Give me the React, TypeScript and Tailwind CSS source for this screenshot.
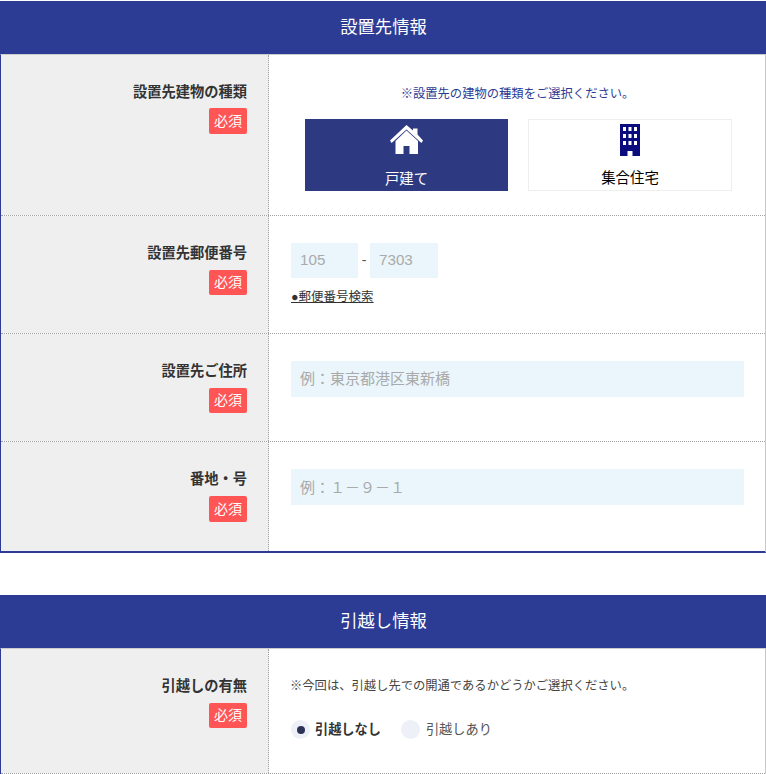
import type { ReactNode } from 'react';

function Row({ label, children, last, className, badgeClass }: { label: string; children: ReactNode; last?: boolean; className: string; badgeClass: string }) {
  return (
    <div className={`flex ${last ? '' : 'border-b border-dotted border-[#a0a0a0]'} ${className}`}>
      <div className="w-[268px] shrink-0 border-r border-dotted border-[#a0a0a0] bg-[#efefef] pr-[21px] text-right">
        <div className="pt-[27px] text-[14.25px] leading-[20px] font-bold text-[#333]">{label}</div>
        <div className="flex justify-end">
          <span className={`flex w-[38px] items-center justify-center rounded-[2px] bg-[#ff5555] text-[14px] text-white ${badgeClass}`}>必須</span>
        </div>
      </div>
      <div className="min-w-0 flex-1 pr-[21px] pl-[22px]">{children}</div>
    </div>
  );
}

function SectionHead({ title }: { title: string }) {
  return <div className="flex h-[53px] items-center justify-center bg-[#2c3c94] pl-px text-[17.3px] text-white">{title}</div>;
}

function HomeIcon() {
  return (
    <svg className="h-[30px] w-[33px]" viewBox="0 0 33 30" fill="#fff">
      <path d="M16.5 0 L23 5.6 V3.5 H27.5 V9.5 L33 15.5 L31.4 18 L16.5 4.4 L1.6 18 L0 15.5 Z" />
      <path d="M16.5 5.4 L28 16 V29 H19.5 V21 H13.5 V29 H5.5 V16 Z" />
    </svg>
  );
}

function BuildingIcon() {
  return (
    <svg className="h-[32px] w-[20px]" viewBox="0 0 20 32">
      <path fill="#0b0b80" d="M0 0 H20 V32 H12.5 V27 H7.5 V32 H0 Z" />
      <g fill="#fff">
        <rect x="3" y="3" width="3" height="4" />
        <rect x="8.5" y="3" width="3" height="4" />
        <rect x="14" y="3" width="3" height="4" />
        <rect x="3" y="10" width="3" height="4" />
        <rect x="8.5" y="10" width="3" height="4" />
        <rect x="14" y="10" width="3" height="4" />
        <rect x="3" y="17" width="3" height="4" />
        <rect x="8.5" y="17" width="3" height="4" />
        <rect x="14" y="17" width="3" height="4" />
      </g>
    </svg>
  );
}

export default function App() {
  return (
    <div className="w-[766px] bg-white pt-px text-[#333]" style={{ fontFamily: '"Liberation Sans", "Noto Sans CJK JP", sans-serif' }}>
      <SectionHead title="設置先情報" />
      <div className="border-x border-t border-b-2 border-x-[#c8c8c8] border-t-[#ccc] border-b-[#2c3c94] border-l-[#2c3c94]">
        <Row label="設置先建物の種類" className="h-[161px]" badgeClass="mt-[6px] h-[26px]">
          <p className="pt-[30px] text-center text-[12.3px] leading-[18px] text-[#2c3c94]">※設置先の建物の種類をご選択ください。</p>
          <div className="mt-[16px] flex gap-[20px] pl-[14px]">
            <div className="flex h-[72px] w-[203px] shrink-0 flex-col items-center bg-[#2d3a82] pt-[6px] text-white">
              <HomeIcon />
              <span className="mt-[14px] text-[14.4px] leading-[20px]">戸建て</span>
            </div>
            <div className="flex h-[72px] w-[204px] shrink-0 flex-col items-center border border-[#eee] pt-[4px] text-black">
              <BuildingIcon />
              <span className="mt-[12px] text-[14.4px] leading-[20px]">集合住宅</span>
            </div>
          </div>
        </Row>
        <Row label="設置先郵便番号" className="h-[118px]" badgeClass="mt-[7px] h-[25px]">
          <div className="flex items-center pt-[27px]">
            <div className="flex h-[35px] w-[67px] items-center bg-[#eaf6fb] pl-[9px] text-[15.2px] text-[#aaa]">105</div>
            <span className="w-[12px] text-center text-[14px] text-[#555]">-</span>
            <div className="flex h-[35px] w-[68px] items-center bg-[#eaf6fb] pl-[9px] text-[15.2px] text-[#aaa]">7303</div>
          </div>
          <a className="mt-[10px] inline-block text-[12.5px] leading-[18px] text-[#333] underline">●郵便番号検索</a>
        </Row>
        <Row label="設置先ご住所" className="h-[108px]" badgeClass="mt-[7px] h-[25px]">
          <div className="mt-[27px] flex h-[36px] items-center bg-[#eaf6fb] pl-[9px] text-[15px] text-[#aaa]">例：東京都港区東新橋</div>
        </Row>
        <Row label="番地・号" last className="h-[109px]" badgeClass="mt-[7px] h-[26px]">
          <div className="mt-[27px] flex h-[36px] items-center bg-[#eaf6fb] pt-[2px] pl-[9px] text-[15px] text-[#aaa]">例：１－９－１</div>
        </Row>
      </div>
      <div className="mt-[42px]">
        <SectionHead title="引越し情報" />
        <div className="border-x border-t border-x-[#c8c8c8] border-t-[#ccc] border-l-[#2c3c94]">
          <Row label="引越しの有無" className="h-[125px]" badgeClass="mt-[7px] h-[25px]">
            <p className="-ml-px pt-[28px] text-[12.3px] leading-[18px] text-[#444]">※今回は、引越し先での開通であるかどうかご選択ください。</p>
            <div className="mt-[25px] flex items-center text-[13.2px]">
              <span className="flex h-[19px] w-[19px] items-center justify-center rounded-full bg-[#eef0f8]">
                <span className="h-[8px] w-[8px] rounded-full bg-[#2d3356]" />
              </span>
              <span className="ml-[5px] font-bold text-[#333]">引越しなし</span>
              <span className="ml-[20px] h-[19px] w-[19px] rounded-full bg-[#eef0f8]" />
              <span className="ml-[6px] text-[#555]">引越しあり</span>
            </div>
          </Row>
        </div>
      </div>
    </div>
  );
}
